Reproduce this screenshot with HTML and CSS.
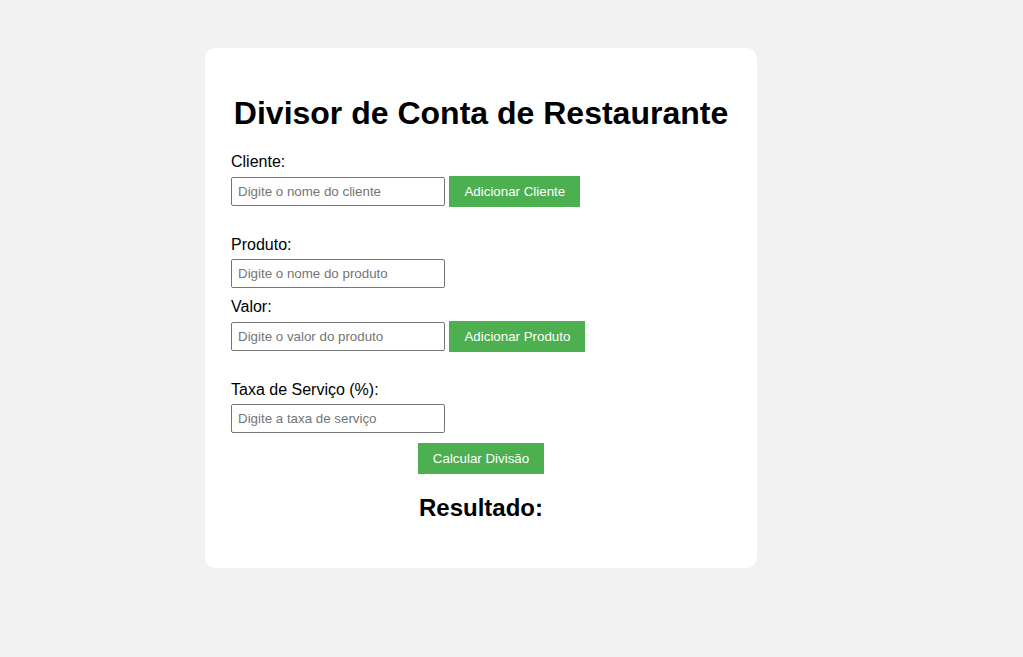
FILE: index.html
```html
<!DOCTYPE html>
<html lang="pt-BR">
<head>
<meta charset="UTF-8">
<title>Divisor de Conta de Restaurante</title>
<link rel="stylesheet" href="styles.css">
</head>
<body>
<div class="card">
  <h1 class="title">Divisor de Conta de Restaurante</h1>

  <div class="section">
    <label class="field-label" for="cliente">Cliente:</label>
    <input class="field" id="cliente" type="text" placeholder="Digite o nome do cliente"> <button class="btn">Adicionar Cliente</button>
  </div>

  <div class="section">
    <label class="field-label" for="produto">Produto:</label>
    <input class="field" id="produto" type="text" placeholder="Digite o nome do produto">
    <label class="field-label" for="valor">Valor:</label>
    <input class="field" id="valor" type="text" placeholder="Digite o valor do produto"> <button class="btn">Adicionar Produto</button>
  </div>

  <div class="section section-last">
    <label class="field-label" for="taxa">Taxa de Serviço (%):</label>
    <input class="field" id="taxa" type="text" placeholder="Digite a taxa de serviço">
  </div>

  <button class="btn btn-center">Calcular Divisão</button>

  <h2 class="result-title">Resultado:</h2>
  <div class="result"></div>
</div>
</body>
</html>
```

FILE: styles.css
```css
html, body {
  margin: 0;
  padding: 0;
}

body {
  background: #f1f1f1;
  font-family: "Liberation Sans", Arial, sans-serif;
  color: #000;
}

.card {
  box-sizing: content-box;
  width: 500px;
  margin: 48px 0 0 205px;
  padding: 26px 26px 26px 26px;
  background: #ffffff;
  border-radius: 10px;
}

.title {
  font-size: 32px;
  font-weight: bold;
  text-align: center;
  margin: 21px 0 21px 0;
}

.section {
  margin-bottom: 20px;
}

.section-last {
  margin-bottom: 0;
}

.field-label {
  display: block;
  font-size: 16px;
  margin-bottom: 5px;
}

.field {
  width: 200px;
  padding: 6px;
  margin: 0 0 10px 0;
  border: 1px solid #767676;
  border-radius: 2px;
  font-family: "Liberation Sans", Arial, sans-serif;
  font-size: 13.333px;
  background: #fff;
  color: #000;
}

.field::placeholder {
  color: #757575;
}

.btn {
  padding: 8px 15px;
  border: none;
  background: #4caf50;
  color: #ffffff;
  font-family: "Liberation Sans", Arial, sans-serif;
  font-size: 13.333px;
  cursor: pointer;
}

.btn-center {
  display: block;
  margin: 0 auto;
}

.result-title {
  font-size: 24px;
  font-weight: bold;
  text-align: center;
  margin: 20px 0;
}

.result {
  min-height: 0;
}
```
